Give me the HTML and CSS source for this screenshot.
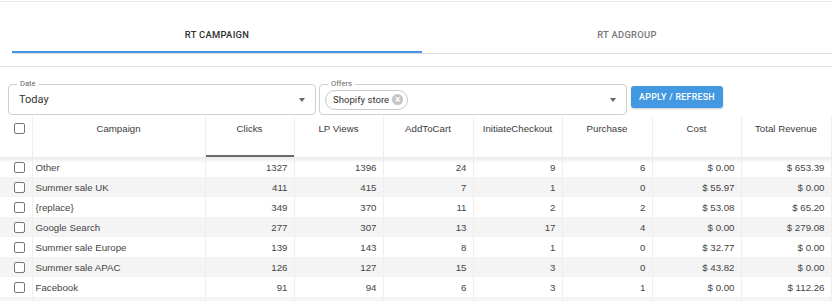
FILE: index.html
```html
<!DOCTYPE html>
<html lang="en">
<head>
  <meta charset="UTF-8" />
  <title>RT Report</title>
  <link rel="stylesheet" href="styles.css">
</head>
<body>
  <div class="tabs-wrap">
    <div class="tabs">
      <div class="tab active">RT CAMPAIGN</div>
      <div class="tab">RT ADGROUP</div>
    </div>
  </div>

  <!-- filters -->
  <div class="filters">
    <div class="field date-field">
      <span class="field-label">Date</span>
      <span class="field-value">Today</span>
      <span class="caret"></span>
    </div>
    <div class="field offers-field">
      <span class="field-label">Offers</span>
      <span class="chip">Shopify store <span class="chip-x">&times;</span></span>
      <span class="caret"></span>
    </div>
    <button class="apply-btn">APPLY / REFRESH</button>
  </div>

  <table class="report">
    <colgroup>
      <col style="width:32px">
      <col style="width:173px">
      <col style="width:89px">
      <col style="width:89px">
      <col style="width:90px">
      <col style="width:89px">
      <col style="width:90px">
      <col style="width:89px">
      <col style="width:90px">
    </colgroup>
    <thead>
      <tr>
        <th class="check-col"><span class="checkbox"></span></th>
        <th>Campaign</th>
        <th class="sorted">Clicks</th>
        <th>LP Views</th>
        <th>AddToCart</th>
        <th>InitiateCheckout</th>
        <th>Purchase</th>
        <th>Cost</th>
        <th>Total Revenue</th>
      </tr>
    </thead>
    <tbody>
      <tr><td class="check-col"><span class="checkbox"></span></td><td class="name">Other</td><td>1327</td><td>1396</td><td>24</td><td>9</td><td>6</td><td>$ 0.00</td><td>$ 653.39</td></tr>
      <tr><td class="check-col"><span class="checkbox"></span></td><td class="name">Summer sale UK</td><td>411</td><td>415</td><td>7</td><td>1</td><td>0</td><td>$ 55.97</td><td>$ 0.00</td></tr>
      <tr><td class="check-col"><span class="checkbox"></span></td><td class="name">{replace}</td><td>349</td><td>370</td><td>11</td><td>2</td><td>2</td><td>$ 53.08</td><td>$ 65.20</td></tr>
      <tr><td class="check-col"><span class="checkbox"></span></td><td class="name">Google Search</td><td>277</td><td>307</td><td>13</td><td>17</td><td>4</td><td>$ 0.00</td><td>$ 279.08</td></tr>
      <tr><td class="check-col"><span class="checkbox"></span></td><td class="name">Summer sale Europe</td><td>139</td><td>143</td><td>8</td><td>1</td><td>0</td><td>$ 32.77</td><td>$ 0.00</td></tr>
      <tr><td class="check-col"><span class="checkbox"></span></td><td class="name">Summer sale APAC</td><td>126</td><td>127</td><td>15</td><td>3</td><td>0</td><td>$ 43.82</td><td>$ 0.00</td></tr>
      <tr><td class="check-col"><span class="checkbox"></span></td><td class="name">Facebook</td><td>91</td><td>94</td><td>6</td><td>3</td><td>1</td><td>$ 0.00</td><td>$ 112.26</td></tr>
      <tr><td></td><td></td><td></td><td></td><td></td><td></td><td></td><td></td><td></td></tr>
    </tbody>
  </table>
</body>
</html>
```

FILE: styles.css
```css
body {
  margin: 0;
  padding-top: 1px;
  font-family: Roboto, "Liberation Sans", sans-serif;
  color: #333;
  background: #fff;
  overflow: hidden;
}

.tabs-wrap {
  border-top: 1px solid #e8e8e8;
  border-bottom: 1px solid #e2e2e2;
  padding: 0 0 12px 12px;
}

.tabs {
  display: flex;
  border-bottom: 1px solid #dedede;
}

.tab {
  width: 411px;
  height: 51px;
  box-sizing: border-box;
  display: flex;
  align-items: flex-end;
  justify-content: center;
  padding-bottom: 13px;
  font-size: 9.4px;
  font-weight: 500;
  letter-spacing: 0.3px;
  color: #777;
}

.tab.active {
  color: #2f2f2f;
  box-shadow: inset 0 -2px 0 #4597e6;
}

.filters {
  display: flex;
  align-items: flex-start;
  padding: 17px 0 0 8px;
}

.field {
  position: relative;
  width: 308px;
  height: 31px;
  box-sizing: border-box;
  border: 1px solid #cfcfcf;
  border-radius: 4px;
  display: flex;
  align-items: center;
  margin-right: 3px;
}

.field-label {
  position: absolute;
  top: -6px;
  left: 8px;
  padding: 0 3px;
  background: #fff;
  font-size: 7.6px;
  color: #666;
  line-height: 10px;
}

.field-value {
  padding-left: 10px;
  font-size: 11px;
  color: #333;
}

.caret {
  margin-left: auto;
  margin-right: 10px;
  width: 0;
  height: 0;
  border-left: 3.5px solid transparent;
  border-right: 3.5px solid transparent;
  border-top: 4px solid #666;
}

.offers-field {
  padding-left: 5px;
}

.chip {
  display: flex;
  align-items: center;
  height: 20px;
  box-sizing: border-box;
  border: 1px solid #c9c9c9;
  border-radius: 10px;
  padding: 0 4px 0 7px;
  font-size: 9.6px;
  color: #333;
}

.chip-x {
  width: 11px;
  height: 11px;
  margin-left: 3px;
  border-radius: 50%;
  background: #c4c4c4;
  color: #fff;
  font-size: 10px;
  line-height: 11px;
  text-align: center;
  font-weight: 700;
}

.apply-btn {
  margin: 2px 0 0 1px;
  width: 92px;
  height: 22px;
  border: none;
  border-radius: 3px;
  background: #4299e1;
  color: #fff;
  font-family: Roboto, sans-serif;
  font-size: 8.8px;
  font-weight: 500;
  letter-spacing: 0.3px;
  box-shadow: 0 1px 2px rgba(0,0,0,0.2);
  padding: 0;
}

.report {
  margin-top: 2px;
  width: 831px;
  table-layout: fixed;
  border-collapse: collapse;
  font-family: "Liberation Sans", Arial, sans-serif;
  font-size: 9.7px;
}

.report th {
  height: 40px;
  padding: 6px 0 0;
  box-sizing: border-box;
  vertical-align: top;
  text-align: center;
  font-weight: 400;
  color: #3c3c3c;
  border-right: 1px solid #eeeeee;
}

.report th.sorted {
  box-shadow: inset 0 -2px 0 #6a6a6a;
}

.report th.check-col,
.report td.check-col {
  padding-left: 14px;
  text-align: left;
}

.report td {
  height: 20px;
  padding: 0 6px 0 0;
  text-align: right;
  color: #444;
  border-right: 1px solid #eeeeee;
  white-space: nowrap;
  overflow: hidden;
}

.report td.name {
  text-align: left;
  padding-left: 3px;
}

.report tbody tr:nth-child(even) td {
  background: #f4f4f4;
}

.report tbody tr:first-child td {
  background: linear-gradient(#e9e9e9, #fff 6px);
}

.checkbox {
  display: block;
  width: 11px;
  height: 11px;
  box-sizing: border-box;
  border: 1px solid #777;
  border-radius: 2px;
  background: #fff;
}
```
